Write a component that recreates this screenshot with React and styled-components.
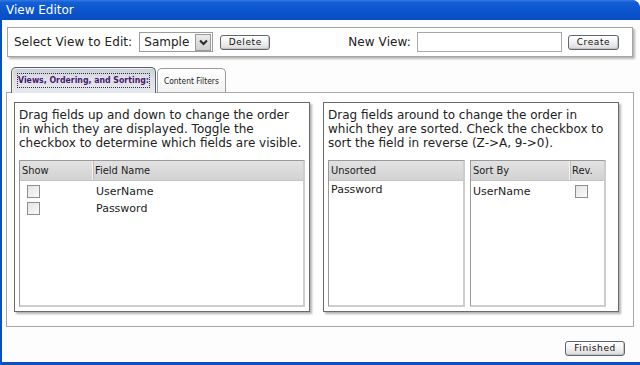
import React from "react";
import styled, { createGlobalStyle } from "styled-components";

const GlobalStyle = createGlobalStyle`
  html, body { margin: 0; padding: 0; background: #fff; }
  body { font-family: "DejaVu Sans", Verdana, sans-serif; }
`;

const Window = styled.div`
  width: 640px;
  height: 365px;
  display: flex;
  flex-direction: column;
  overflow: hidden;
  background: #0b4fc2;
  border-top-right-radius: 8px;
`;

const TitleBar = styled.div`
  height: 20px;
  flex: none;
  display: flex;
  align-items: center;
  padding-left: 6px;
  background: linear-gradient(#3579e2 0%, #135fd6 12%, #0b55cd 50%, #094dc2 100%);
  color: #fff;
  font-size: 12px;
  border-top-right-radius: 8px;
`;

const Body = styled.div`
  flex: 1;
  display: flex;
  flex-direction: column;
  margin-left: 2px;
  margin-bottom: 3px;
  padding: 7px 6px 0 4px;
  background: #fdfdfd;
  min-height: 0;
`;

const Toolbar = styled.div`
  height: 28px;
  margin: 0 1px 10px 1px;
  border: 1px solid #a4a4a4;
  box-shadow: 2px 2px 2px rgba(0, 0, 0, 0.28);
  background: #fff;
  display: flex;
  align-items: center;
  justify-content: space-between;
  padding: 0 13px 0 6px;
`;

const Group = styled.div`
  display: flex;
  align-items: center;
  gap: ${(p) => p.$gap || 6}px;
`;

const Label = styled.span`
  font-size: 12px;
  color: #222;
  letter-spacing: 0.1px;
`;

const SelectBox = styled.div`
  width: 67px;
  height: 18px;
  border: 1px solid #9c9c9c;
  background: #fff;
  display: flex;
  align-items: center;
  justify-content: space-between;
  padding-left: 4px;
  padding-right: 1px;
  font-size: 12px;
  color: #222;
`;

const SelectArrow = styled.span`
  width: 14px;
  height: 15px;
  border: 1px solid #9a9a9a;
  background: linear-gradient(#ececec, #cfcfcf);
  display: flex;
  align-items: center;
  justify-content: center;
`;

const Button = styled.button`
  width: ${(p) => p.$w}px;
  height: 15px;
  padding: 0;
  border: 1px solid #5f6670;
  border-radius: 3px;
  background: linear-gradient(#ffffff 0%, #f1f1f1 50%, #d9d9d9 100%);
  box-shadow: inset -1px -1px 0 #c4c4c4;
  font-family: "DejaVu Sans", Verdana, sans-serif;
  font-size: 9px;
  letter-spacing: 0.6px;
  color: #111;
  line-height: 13px;
  cursor: pointer;
`;

const TextInput = styled.div`
  width: 143px;
  height: 18px;
  border: 1px solid #a9a9a9;
  background: #fff;
`;

const TabStrip = styled.div`
  display: flex;
  align-items: flex-end;
  gap: 1px;
  padding-left: 5px;
  height: 25px;
  position: relative;
  z-index: 1;
`;

const Tab = styled.div`
  height: ${(p) => (p.$active ? 25 : 23)}px;
  margin-bottom: ${(p) => (p.$active ? -1 : 0)}px;
  padding: 0 ${(p) => (p.$active ? 6 : 6)}px;
  display: flex;
  align-items: center;
  border: 1px solid ${(p) => (p.$active ? "#56616e" : "#9c9c9c")};
  border-bottom: none;
  border-radius: 5px 5px 0 0;
  background: ${(p) =>
    p.$active
      ? "linear-gradient(#c9cfd7, #dde1e6 40%, #e6e9ed)"
      : "linear-gradient(#ffffff, #f3f3f3)"};
  box-shadow: ${(p) => (p.$active ? "inset 1px 1px 0 #eef0f3" : "none")};
  font-family: "DejaVu Sans Condensed", "DejaVu Sans", sans-serif;
  font-size: ${(p) => (p.$active ? 8.7 : 8.4)}px;
  font-weight: ${(p) => (p.$active ? 700 : 400)};
  color: ${(p) => (p.$active ? "#4a1670" : "#222")};
`;

const FocusText = styled.span`
  outline: 1px dotted #3a2a4a;
  outline-offset: 0px;
  padding: 1px 0;
  line-height: 11px;
`;

const TabPanel = styled.div`
  flex: 1;
  min-height: 0;
  border: 1px solid #a8a8a8;
  background: #fff;
  display: grid;
  grid-template-columns: 296px 296px;
  column-gap: 13px;
  padding: 9px 14px 14px 7px;
`;

const Pane = styled.div`
  border: 1px solid #6a6a6a;
  box-shadow: 2px 2px 2px rgba(0, 0, 0, 0.3);
  background: #fff;
  display: flex;
  flex-direction: column;
  padding: 5px 4px 4px 4px;
  min-height: 0;
`;

const Hint = styled.p`
  margin: 0 0 10px 0;
  font-size: 12px;
  line-height: 14px;
  color: #222;
  white-space: pre-line;
`;

const Lists = styled.div`
  flex: 1;
  display: grid;
  grid-template-columns: 137px 136px;
  column-gap: 5px;
  min-height: 0;
`;

const DataTable = styled.div`
  flex: 1;
  display: flex;
  flex-direction: column;
  border-style: solid;
  border-width: 1px 2px 2px 1px;
  border-color: #9a9a9a #cdcdcd #cdcdcd #9a9a9a;
  background: #fff;
  min-height: 0;
`;

const HeadRow = styled.div`
  height: 20px;
  display: grid;
  grid-template-columns: ${(p) => p.$cols};
  background: linear-gradient(#e2e2e2, #d2d2d2);
  border-bottom: 1px solid #c4c4c4;
  box-sizing: border-box;
`;

const HeadCell = styled.div`
  display: flex;
  align-items: center;
  padding-left: ${(p) => p.$pad ?? 2}px;
  font-family: "DejaVu Sans Condensed", "DejaVu Sans", sans-serif;
  font-size: 11px;
  color: #222;
  border-right: ${(p) => (p.$sep ? "1px solid #f6f6f6" : "none")};
  box-shadow: ${(p) => (p.$sep ? "1px 0 0 #bdbdbd" : "none")};
`;

const Rows = styled.div`
  padding-top: ${(p) => p.$top ?? 2}px;
`;

const Row = styled.div`
  height: 17px;
  display: grid;
  grid-template-columns: ${(p) => p.$cols};
  align-items: center;
`;

const Cell = styled.div`
  display: flex;
  align-items: center;
  justify-content: ${(p) => (p.$center ? "center" : "flex-start")};
  padding-left: ${(p) => p.$pad ?? 3}px;
  font-size: 11px;
  color: #222;
`;

const Check = styled.span`
  width: 11px;
  height: 11px;
  border: 1px solid #8e8e8e;
  background: linear-gradient(135deg, #e4e4e4, #fafafa);
  display: inline-block;
`;

const Footer = styled.div`
  height: 35px;
  flex: none;
  display: flex;
  justify-content: flex-end;
  align-items: flex-start;
  padding: 14px 9px 0 0;
  box-sizing: border-box;
`;

const Chevron = () => (
  <svg width="9" height="7" viewBox="0 0 9 7">
    <path d="M1 1.5 L4.5 5 L8 1.5" fill="none" stroke="#2a2a2a" strokeWidth="2" />
  </svg>
);

export default function App() {
  const leftCols = "73px 1fr";
  const sortCols = "99px 1fr";
  return (
    <>
      <GlobalStyle />
      <Window>
        <TitleBar>View Editor</TitleBar>
        <Body>
          <Toolbar>
            <Group $gap={7}>
              <Label>Select View to Edit:</Label>
              <SelectBox>
                Sample
                <SelectArrow>
                  <Chevron />
                </SelectArrow>
              </SelectBox>
              <Button $w={50}>Delete</Button>
            </Group>
            <Group $gap={6}>
              <Label>New View:</Label>
              <TextInput />
              <Button $w={51}>Create</Button>
            </Group>
          </Toolbar>

          <TabStrip>
            <Tab $active>
              <FocusText>Views, Ordering, and Sorting:</FocusText>
            </Tab>
            <Tab>Content Filters</Tab>
          </TabStrip>

          <TabPanel>
            <Pane>
              <Hint>
                {"Drag fields up and down to change the order\nin which they are displayed. Toggle the\ncheckbox to determine which fields are visible."}
              </Hint>
              <DataTable>
                <HeadRow $cols={leftCols}>
                  <HeadCell $sep>Show</HeadCell>
                  <HeadCell>Field Name</HeadCell>
                </HeadRow>
                <Rows>
                  {["UserName", "Password"].map((f) => (
                    <Row key={f} $cols={leftCols}>
                      <Cell $pad={7}>
                        <Check />
                      </Cell>
                      <Cell>{f}</Cell>
                    </Row>
                  ))}
                </Rows>
              </DataTable>
            </Pane>

            <Pane>
              <Hint>
                {"Drag fields around to change the order in\nwhich they are sorted. Check the checkbox to\nsort the field in reverse (Z->A, 9->0)."}
              </Hint>
              <Lists>
                <DataTable>
                  <HeadRow $cols="1fr">
                    <HeadCell>Unsorted</HeadCell>
                  </HeadRow>
                  <Rows $top={0}>
                    <Row $cols="1fr">
                      <Cell $pad={2}>Password</Cell>
                    </Row>
                  </Rows>
                </DataTable>
                <DataTable>
                  <HeadRow $cols={sortCols}>
                    <HeadCell $sep>Sort By</HeadCell>
                    <HeadCell>Rev.</HeadCell>
                  </HeadRow>
                  <Rows>
                    <Row $cols={sortCols}>
                      <Cell $pad={2}>UserName</Cell>
                      <Cell $pad={5}>
                        <Check />
                      </Cell>
                    </Row>
                  </Rows>
                </DataTable>
              </Lists>
            </Pane>
          </TabPanel>

          <Footer>
            <Button $w={60}>Finished</Button>
          </Footer>
        </Body>
      </Window>
    </>
  );
}
